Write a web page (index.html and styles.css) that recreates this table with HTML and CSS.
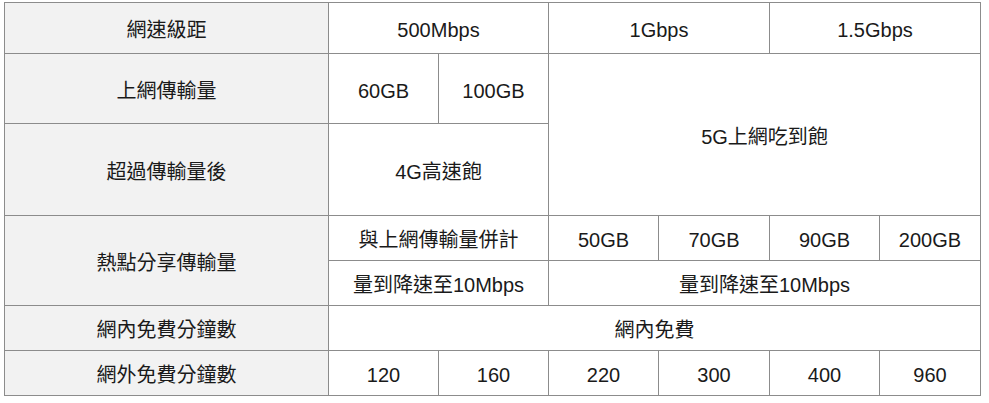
FILE: index.html
```html
<!DOCTYPE html>
<html lang="zh-Hant">
<head>
<meta charset="utf-8">
<title>資費比較</title>
<link rel="stylesheet" href="styles.css">
</head>
<body>
<div class="plan-table">
  <div class="cell head">網速級距</div>
  <div class="cell span2">500Mbps</div>
  <div class="cell span2">1Gbps</div>
  <div class="cell span2">1.5Gbps</div>

  <div class="cell head">上網傳輸量</div>
  <div class="cell">60GB</div>
  <div class="cell">100GB</div>
  <div class="cell span4 rows2">5G上網吃到飽</div>

  <div class="cell head">超過傳輸量後</div>
  <div class="cell span2">4G高速飽</div>

  <div class="cell head rows2">熱點分享傳輸量</div>
  <div class="cell span2">與上網傳輸量併計</div>
  <div class="cell">50GB</div>
  <div class="cell">70GB</div>
  <div class="cell">90GB</div>
  <div class="cell">200GB</div>

  <div class="cell span2">量到降速至10Mbps</div>
  <div class="cell span4">量到降速至10Mbps</div>

  <div class="cell head">網內免費分鐘數</div>
  <div class="cell span6">網內免費</div>

  <div class="cell head">網外免費分鐘數</div>
  <div class="cell">120</div>
  <div class="cell">160</div>
  <div class="cell">220</div>
  <div class="cell">300</div>
  <div class="cell">400</div>
  <div class="cell">960</div>
</div>
</body>
</html>
```

FILE: styles.css
```css
html, body {
  margin: 0;
  padding: 0;
  background: #ffffff;
}

body {
  padding: 2px 0 0 4px;
  font-family: "Liberation Sans", "Noto Sans CJK TC", sans-serif;
  font-size: 20px;
  color: #1a1a1a;
}

.plan-table {
  display: grid;
  width: max-content;
  grid-template-columns: 323px 109px 109px 109px 110px 109px 100px;
  grid-template-rows: 50px 69px 91px 44px 44px 44px 44px;
  gap: 1px;
  padding: 1px;
  background: #8c8c8c;
}

.cell {
  display: flex;
  align-items: center;
  justify-content: center;
  padding-top: 4px;
  background: #ffffff;
  line-height: 1;
  white-space: nowrap;
}

.head {
  background: #f2f2f2;
}

.span2 { grid-column: span 2; }
.span4 { grid-column: span 4; }
.span6 { grid-column: span 6; }
.rows2 { grid-row: span 2; }
```
